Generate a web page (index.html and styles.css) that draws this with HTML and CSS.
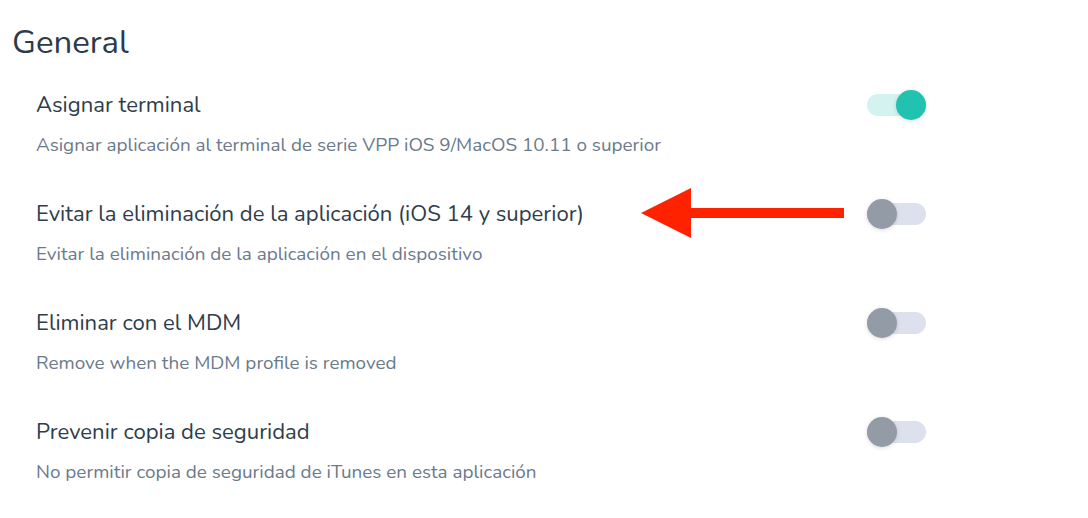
FILE: index.html
```html
<!DOCTYPE html>
<html lang="es">
<head>
    <meta charset="UTF-8">
    <meta name="viewport" content="width=device-width, initial-scale=1.0">
    <title>General</title>
    <link rel="stylesheet" href="styles.css">
</head>
<body>
    <div class="page">
        <h1>General</h1>
        <div class="settings">
            <div class="setting">
                <div class="setting-head">
                    <span class="setting-title">Asignar terminal</span>
                    <span class="toggle on"><span class="knob"></span></span>
                </div>
                <p class="setting-desc">Asignar aplicación al terminal de serie VPP iOS 9/MacOS 10.11 o superior</p>
            </div>
            <div class="setting">
                <div class="setting-head">
                    <span class="setting-title">Evitar la eliminación de la aplicación (iOS 14 y superior)</span>
                    <span class="toggle"><span class="knob"></span></span>
                    <svg class="arrow" width="210" height="54" viewBox="0 0 210 54">
                        <polygon points="0,27 50,2 50,22 203,22 203,32 50,32 50,52" fill="#ff2200"/>
                    </svg>
                </div>
                <p class="setting-desc">Evitar la eliminación de la aplicación en el dispositivo</p>
            </div>
            <div class="setting">
                <div class="setting-head">
                    <span class="setting-title">Eliminar con el MDM</span>
                    <span class="toggle"><span class="knob"></span></span>
                </div>
                <p class="setting-desc">Remove when the MDM profile is removed</p>
            </div>
            <div class="setting">
                <div class="setting-head">
                    <span class="setting-title">Prevenir copia de seguridad</span>
                    <span class="toggle"><span class="knob"></span></span>
                </div>
                <p class="setting-desc">No permitir copia de seguridad de iTunes en esta aplicación</p>
            </div>
        </div>
    </div>
</body>
</html>
```

FILE: styles.css
```css
body {
    margin: 0;
    background-color: #fff;
    font-family: "Nunito", Lato, "Open Sans", sans-serif;
    color: #2c3a4a;
}
.page {
    padding: 23px 0 0 12px;
}
h1 {
    margin: 0;
    font-size: 33px;
    font-weight: 400;
    line-height: 40px;
    color: #2c3a4a;
}
.settings {
    width: 890px;
    margin-left: 24px;
    padding-top: 27px;
}
.setting {
    height: 109px;
}
.setting-head {
    position: relative;
    display: flex;
    justify-content: space-between;
    align-items: center;
    height: 30px;
}
.setting-title {
    font-size: 22.1px;
    color: #2f3d4c;
}
.setting-desc {
    margin: 13px 0 0 0;
    font-size: 18.9px;
    line-height: 24px;
    color: #6b7a8c;
}
.toggle {
    position: relative;
    width: 59px;
    height: 22px;
    border-radius: 11px;
    background-color: #dde1ee;
}
.toggle .knob {
    position: absolute;
    top: -4px;
    left: 0;
    width: 30px;
    height: 30px;
    border-radius: 50%;
    background-color: #939ca6;
    box-shadow: 0 1px 4px rgba(0, 0, 0, 0.15);
}
.toggle.on {
    background-color: #d4f2ef;
}
.toggle.on .knob {
    left: auto;
    right: 0;
    background-color: #21c2b0;
}
.arrow {
    position: absolute;
    left: 605px;
    top: -13px;
}
```
